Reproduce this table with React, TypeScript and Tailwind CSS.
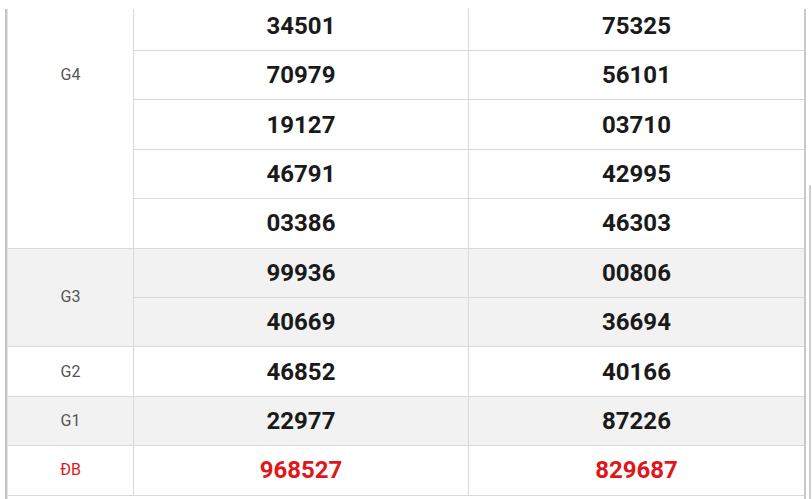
import React from 'react';

type Row = { label: string; nums: [string, string][]; shaded?: boolean; red?: boolean; top?: boolean };

const rows: Row[] = [
  { label: 'G4', nums: [['34501', '75325'], ['70979', '56101'], ['19127', '03710'], ['46791', '42995'], ['03386', '46303']], top: true },
  { label: 'G3', nums: [['99936', '00806'], ['40669', '36694']], shaded: true },
  { label: 'G2', nums: [['46852', '40166']] },
  { label: 'G1', nums: [['22977', '87226']], shaded: true },
  { label: 'ĐB', nums: [['968527', '829687']], red: true },
];

export default function App() {
  return (
    <div className="relative w-[812px] h-[499px] overflow-hidden bg-white" style={{ fontFamily: 'Roboto, "Liberation Sans", sans-serif' }}>
      <div className="flex h-full">
        <div className="w-[5px] shrink-0" />
        <div className="w-[2px] shrink-0 bg-[#c4c4c4]" />
        <div className="w-[797px] shrink-0 border-l border-[#e4e4e4]">
          <div className="mt-[1.6px]">
            {rows.map((r) => (
              <div key={r.label} className={`grid grid-cols-[126px_335px_335px] ${r.shaded ? 'bg-[#f2f2f2]' : 'bg-white'}`}>
                <div
                  className={`flex justify-center border-r border-b border-[#d9d9d9] text-[16px] ${r.top ? 'items-start pt-[61px]' : 'items-center'} ${r.red ? 'text-[#e0161b]' : 'text-[#555]'}`}
                  style={{ gridRow: `span ${r.nums.length}` }}
                >
                  {r.label}
                </div>
                {r.nums.map(([a, b], i) => (
                  <React.Fragment key={i}>
                    <div className={`h-[49.4px] flex items-center justify-center border-r border-b border-[#d9d9d9] text-[24px] font-bold ${r.red ? 'text-[#e0161b]' : 'text-[#1a1a1a]'}`}>
                      {a}
                    </div>
                    <div className={`h-[49.4px] flex items-center justify-center border-b border-[#d9d9d9] text-[24px] font-bold ${r.red ? 'text-[#e0161b]' : 'text-[#1a1a1a]'}`}>
                      {b}
                    </div>
                  </React.Fragment>
                ))}
              </div>
            ))}
          </div>
        </div>
        <div className="w-[2px] shrink-0 bg-[#c8c8c8]" />
        <div className="w-[3px] shrink-0" />
        <div className="w-[2px] shrink-0 mt-[185px] bg-[#cfcfcf]" />
      </div>
      {/* strip hiding the top of the first row, as in the scrolled capture */}
      <div className="absolute top-0 left-0 right-0 h-[9px] bg-white" />
    </div>
  );
}
